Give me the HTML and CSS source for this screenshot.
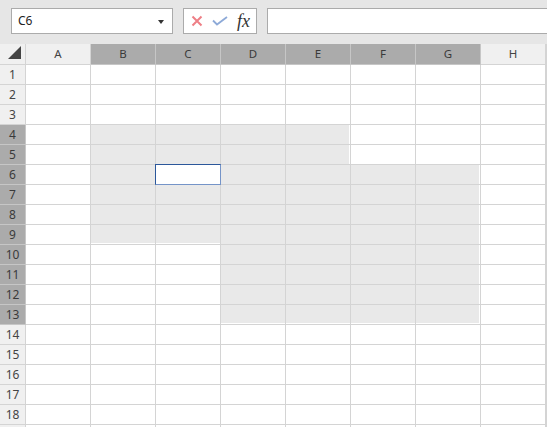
FILE: index.html
```html
<!DOCTYPE html>
<html>
<head>
<meta charset="utf-8">
<link rel="stylesheet" href="styles.css">
</head>
<body>
<div class="toolbar">
  <div class="namebox"><span class="ref">C6</span><svg class="drop" width="6" height="4" viewBox="0 0 6 4"><path d="M0 0H6L3 4Z" fill="#333"/></svg></div>
  <div class="fxbox">
    <svg class="ico" width="12" height="12" viewBox="0 0 12 12"><path d="M1.5 1.5L10.5 10.5M10.5 1.5L1.5 10.5" stroke="#ee7f86" stroke-width="2"/></svg>
    <svg class="ico" width="16" height="10" viewBox="0 0 16 10"><path d="M1 4.5L5 8.5L15 1" stroke="#8eaad8" stroke-width="1.8" fill="none"/></svg>
    <span class="fx">fx</span>
  </div>
  <div class="formula"></div>
</div>
<div class="sheet">
  <div class="corner"><svg width="14" height="14" viewBox="0 0 14 14"><path d="M13 0V13H0Z" fill="#444"/></svg></div>
  <div class="ch">A</div><div class="ch sel">B</div><div class="ch sel">C</div><div class="ch sel">D</div><div class="ch sel">E</div><div class="ch sel">F</div><div class="ch sel">G</div><div class="ch">H</div><div class="ch"></div>

  <div class="rh">1</div><div class="c"></div><div class="c"></div><div class="c"></div><div class="c"></div><div class="c"></div><div class="c"></div><div class="c"></div><div class="c"></div><div class="c"></div>
  <div class="rh">2</div><div class="c"></div><div class="c"></div><div class="c"></div><div class="c"></div><div class="c"></div><div class="c"></div><div class="c"></div><div class="c"></div><div class="c"></div>
  <div class="rh">3</div><div class="c"></div><div class="c"></div><div class="c"></div><div class="c"></div><div class="c"></div><div class="c"></div><div class="c"></div><div class="c"></div><div class="c"></div>
  <div class="rh sel">4</div><div class="c"></div><div class="c s"></div><div class="c s"></div><div class="c s"></div><div class="c s er"></div><div class="c"></div><div class="c"></div><div class="c"></div><div class="c"></div>
  <div class="rh sel">5</div><div class="c"></div><div class="c s"></div><div class="c s"></div><div class="c s"></div><div class="c s er"></div><div class="c"></div><div class="c"></div><div class="c"></div><div class="c"></div>
  <div class="rh sel">6</div><div class="c"></div><div class="c s"></div><div class="c active"></div><div class="c s"></div><div class="c s"></div><div class="c s"></div><div class="c s er"></div><div class="c"></div><div class="c"></div>
  <div class="rh sel">7</div><div class="c"></div><div class="c s"></div><div class="c s"></div><div class="c s"></div><div class="c s"></div><div class="c s"></div><div class="c s er"></div><div class="c"></div><div class="c"></div>
  <div class="rh sel">8</div><div class="c"></div><div class="c s"></div><div class="c s"></div><div class="c s"></div><div class="c s"></div><div class="c s"></div><div class="c s er"></div><div class="c"></div><div class="c"></div>
  <div class="rh sel">9</div><div class="c"></div><div class="c s eb"></div><div class="c s eb"></div><div class="c s"></div><div class="c s"></div><div class="c s"></div><div class="c s er"></div><div class="c"></div><div class="c"></div>
  <div class="rh sel">10</div><div class="c"></div><div class="c"></div><div class="c"></div><div class="c s"></div><div class="c s"></div><div class="c s"></div><div class="c s er"></div><div class="c"></div><div class="c"></div>
  <div class="rh sel">11</div><div class="c"></div><div class="c"></div><div class="c"></div><div class="c s"></div><div class="c s"></div><div class="c s"></div><div class="c s er"></div><div class="c"></div><div class="c"></div>
  <div class="rh sel">12</div><div class="c"></div><div class="c"></div><div class="c"></div><div class="c s"></div><div class="c s"></div><div class="c s"></div><div class="c s er"></div><div class="c"></div><div class="c"></div>
  <div class="rh sel">13</div><div class="c"></div><div class="c"></div><div class="c"></div><div class="c s eb"></div><div class="c s eb"></div><div class="c s eb"></div><div class="c s eb er"></div><div class="c"></div><div class="c"></div>
  <div class="rh">14</div><div class="c"></div><div class="c"></div><div class="c"></div><div class="c"></div><div class="c"></div><div class="c"></div><div class="c"></div><div class="c"></div><div class="c"></div>
  <div class="rh">15</div><div class="c"></div><div class="c"></div><div class="c"></div><div class="c"></div><div class="c"></div><div class="c"></div><div class="c"></div><div class="c"></div><div class="c"></div>
  <div class="rh">16</div><div class="c"></div><div class="c"></div><div class="c"></div><div class="c"></div><div class="c"></div><div class="c"></div><div class="c"></div><div class="c"></div><div class="c"></div>
  <div class="rh">17</div><div class="c"></div><div class="c"></div><div class="c"></div><div class="c"></div><div class="c"></div><div class="c"></div><div class="c"></div><div class="c"></div><div class="c"></div>
  <div class="rh">18</div><div class="c"></div><div class="c"></div><div class="c"></div><div class="c"></div><div class="c"></div><div class="c"></div><div class="c"></div><div class="c"></div><div class="c"></div>
  <div class="rh"></div><div class="c"></div><div class="c"></div><div class="c"></div><div class="c"></div><div class="c"></div><div class="c"></div><div class="c"></div><div class="c"></div><div class="c"></div>
</div>
</body>
</html>
```
FILE: styles.css
```css
html, body {
  margin: 0;
  padding: 0;
}
body {
  width: 547px;
  height: 427px;
  overflow: hidden;
  background: #fff;
  font-family: "Noto Sans", "Open Sans", sans-serif;
}
.toolbar {
  display: flex;
  gap: 10px;
  height: 44px;
  box-sizing: border-box;
  padding: 8px 0 0 11px;
  background: #e6e6e6;
}
.namebox, .fxbox, .formula {
  height: 26px;
  box-sizing: border-box;
  border: 1px solid #ababab;
  background: #fff;
}
.namebox {
  width: 162px;
  display: flex;
  align-items: center;
  justify-content: space-between;
  padding: 0 8px 0 6px;
  font-size: 12px;
  color: #222;
}
.ref {
  line-height: 1;
}
.drop {
  margin-top: 1px;
}
.fxbox {
  width: 74px;
  display: flex;
  align-items: center;
  padding-left: 7px;
  gap: 9px;
}
.fx {
  font-family: "Liberation Serif", serif;
  font-style: italic;
  font-size: 18px;
  line-height: 1;
  color: #333;
  margin-left: 0;
  margin-top: -1px;
  letter-spacing: 0;
}
.formula {
  flex: 1;
  margin-right: -10px;
}
.sheet {
  display: grid;
  grid-template-columns: 26px repeat(8, 65px) 1fr;
  grid-template-rows: 21px;
  grid-auto-rows: 20px;
}
.sheet > div {
  box-sizing: border-box;
  border-right: 1px solid #d4d4d4;
  border-bottom: 1px solid #d4d4d4;
}
.corner {
  background: #f0f0f0;
  display: flex;
  align-items: flex-end;
  justify-content: flex-end;
  padding: 0 3px 4px 0;
}
.corner svg {
  display: block;
}
.ch, .rh {
  background: #f0f0f0;
  color: #444;
  font-size: 11.5px;
  display: flex;
  align-items: center;
  justify-content: center;
  line-height: 1;
}
.rh {
  font-size: 12px;
}
.ch.sel, .rh.sel {
  background: #ababab;
  color: #3a3a3a;
  border-color: #c6c6c6;
}
.c {
  background: #fff;
}
.c.s {
  background: #e9e9e9;
}
.c.er {
  box-shadow: inset -1px 0 0 #fff;
}
.c.eb {
  box-shadow: inset 0 -1px 0 #fff;
}
.c.eb.er {
  box-shadow: inset -1px 0 0 #fff, inset 0 -1px 0 #fff;
}
.c.active {
  position: relative;
  background: #fff;
}
.c.active::after {
  content: "";
  position: absolute;
  left: -1px;
  top: -1px;
  right: -1px;
  bottom: -1px;
  border: 1px solid;
  border-color: #2b579a #7594c8 #7594c8 #2b579a;
}
```
